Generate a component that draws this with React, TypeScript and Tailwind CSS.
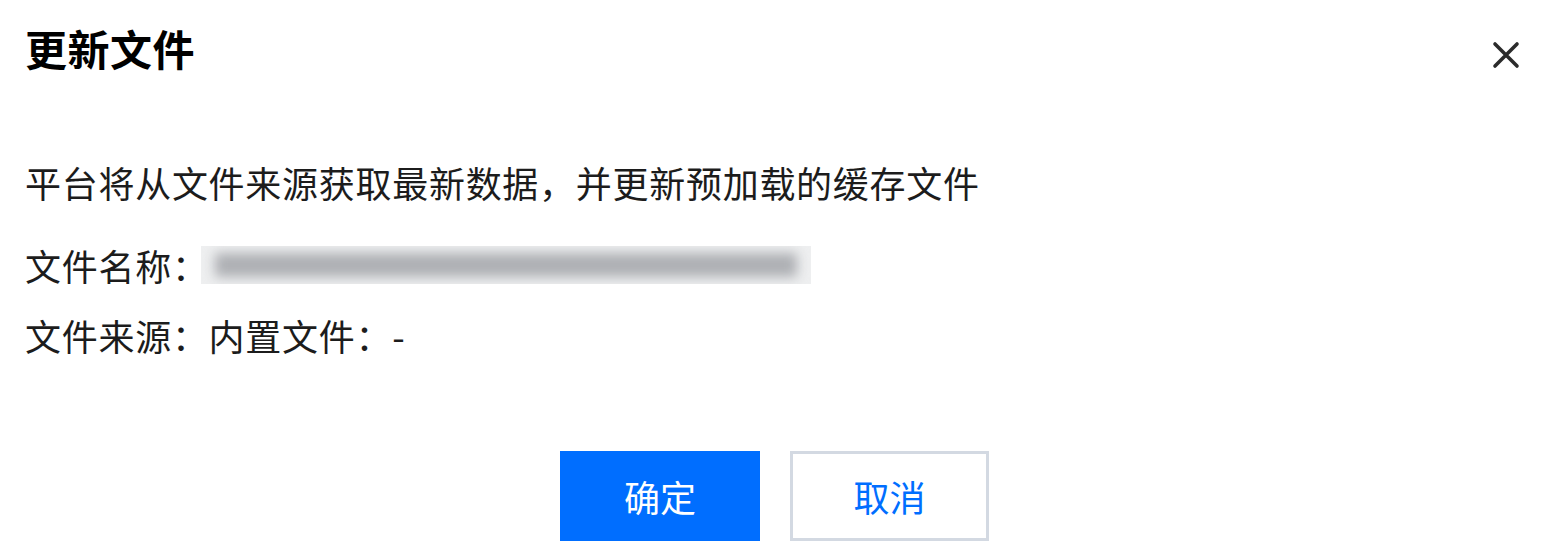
import React from "react";

export default function App() {
  const font = { fontFamily: '"Noto Sans CJK SC", "Noto Sans", sans-serif' };
  return (
    <div className="w-[1549px] h-[558px] bg-white flex flex-col" style={font}>
      <div className="flex items-start justify-between pt-[27px] pl-[25px] pr-[29px]">
        <h1 className="text-[42px] leading-[42px] font-bold text-black tracking-[0.5px]">更新文件</h1>
        <svg width="28" height="28" viewBox="0 0 28 28" className="mt-[14px]">
          <path d="M3 3 L25 25 M25 3 L3 25" stroke="#2b2b2b" strokeWidth="3.6" strokeLinecap="round" fill="none" />
        </svg>
      </div>
      <div className="flex flex-col pl-[25px] mt-[95px] text-[36px] leading-[36px] text-[#1c1c1c] tracking-[0.72px]">
        <div className="h-[36px]">平台将从文件来源获取最新数据，并更新预加载的缓存文件</div>
        <div className="flex items-center h-[38px] mt-[46px]">
          <span>文件名称：</span>
          <div className="ml-[-8px] w-[610px] h-[38px] bg-[#eeeff0] overflow-hidden flex items-center">
            <div className="mx-[14px] flex-1 h-[24px] bg-[#aeb0b4] blur-[6px]" />
          </div>
        </div>
        <div className="h-[36px] mt-[33px]">文件来源：内置文件：-</div>
      </div>
      <div className="flex justify-center gap-[30px] mt-[98px]">
        <button className="w-[200px] h-[90px] bg-[#006eff] text-white text-[36px] leading-[36px] flex items-center justify-center">
          确定
        </button>
        <button className="w-[199px] h-[90px] bg-white border-[3px] border-[#d3d9e2] text-[#006eff] text-[36px] leading-[36px] flex items-center justify-center">
          取消
        </button>
      </div>
    </div>
  );
}
